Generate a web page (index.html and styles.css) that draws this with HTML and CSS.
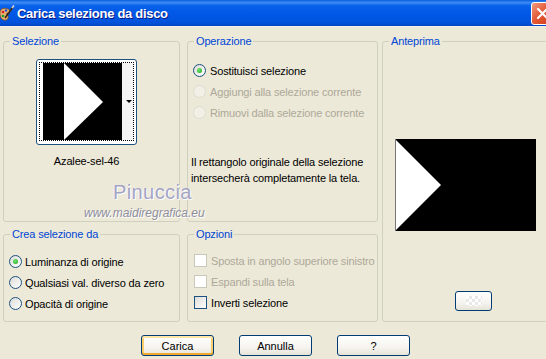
FILE: index.html
```html
<!DOCTYPE html>
<html lang="it">

<head>
    <meta charset="UTF-8">
    <title>Carica selezione da disco</title>
    <link rel="stylesheet" href="styles.css">
</head>

<body>
    <div class="window">
        <div class="titlebar">
            <svg class="app-icon" width="16" height="16" viewBox="0 0 16 16">
                <path d="M1 9 C0 4 5 2 9 4 C12 5 11 8 9 8 C7 8 7 10 9 11 C10 13 8 16 5 15 C3 15 1 12 1 9 Z" fill="#e8b070" stroke="#7a4a1a" stroke-width="0.8"/>
                <circle cx="4" cy="7" r="1.3" fill="#d42020"/>
                <circle cx="7" cy="5.5" r="1.2" fill="#2050d0"/>
                <circle cx="4" cy="11" r="1.3" fill="#20a030"/>
                <path d="M6 13 L14 2" stroke="#3a2a10" stroke-width="1.6"/>
                <path d="M13 3 L15 0.5" stroke="#d0d0d0" stroke-width="1.8"/>
            </svg>
            <span class="title">Carica selezione da disco</span>
            <span class="close">
                <svg width="21" height="21" viewBox="0 0 21 21">
                    <path d="M6 6 L15 15 M15 6 L6 15" stroke="#fff" stroke-width="2.2" stroke-linecap="round"/>
                </svg>
            </span>
        </div>

        <div class="panels">
            <fieldset class="group sel">
                <legend>Selezione</legend>
                <div class="thumb">
                    <div class="focus">
                        <svg class="thumb-img" width="79" height="77" viewBox="0 0 79 77">
                            <rect width="79" height="77" fill="#000"/>
                            <polygon points="21,0 60,39 21,77" fill="#fff"/>
                        </svg>
                        <div class="thumb-side"></div>
                    </div>
                    <span class="drop-arrow"></span>
                </div>
                <div class="thumb-name">Azalee-sel-46</div>
            </fieldset>

            <fieldset class="group op">
                <legend>Operazione</legend>
                <div class="options">
                    <div class="row"><span class="radio checked"></span>Sostituisci selezione</div>
                    <div class="row disabled"><span class="radio"></span>Aggiungi alla selezione corrente</div>
                    <div class="row disabled"><span class="radio"></span>Rimuovi dalla selezione corrente</div>
                </div>
                <p class="desc">Il rettangolo originale della selezione<br>intersecherà completamente la tela.</p>
            </fieldset>

            <fieldset class="group preview-group">
                <legend>Anteprima</legend>
                <svg class="preview" width="141" height="92" viewBox="0 0 141 92">
                    <rect width="141" height="92" fill="#000"/>
                    <polygon points="0,0 46,46 0,92" fill="#fff"/>
                    <line x1="0.5" y1="0" x2="0.5" y2="92" stroke="#777" stroke-width="1"/>
                </svg>
                <button class="btn small"><span class="checker"></span></button>
            </fieldset>

            <fieldset class="group crea">
                <legend>Crea selezione da</legend>
                <div class="options">
                    <div class="row"><span class="radio checked"></span>Luminanza di origine</div>
                    <div class="row"><span class="radio"></span>Qualsiasi val. diverso da zero</div>
                    <div class="row"><span class="radio"></span>Opacità di origine</div>
                </div>
            </fieldset>

            <fieldset class="group opz">
                <legend>Opzioni</legend>
                <div class="options">
                    <div class="row disabled"><span class="check"></span>Sposta in angolo superiore sinistro</div>
                    <div class="row disabled"><span class="check"></span>Espandi sulla tela</div>
                    <div class="row"><span class="check"></span>Inverti selezione</div>
                </div>
            </fieldset>
        </div>

        <div class="buttons">
            <button class="btn default">Carica</button>
            <button class="btn">Annulla</button>
            <button class="btn">?</button>
        </div>

        <div class="watermark">
            <div class="wm-name">Pinuccia</div>
            <div class="wm-url">www.maidiregrafica.eu</div>
        </div>
    </div>
</body>

</html>
```

FILE: styles.css
```css
body {
    margin: 0;
    background: #ece9d8;
    font-family: "Liberation Sans", Arial, sans-serif;
    font-size: 11px;
    letter-spacing: -0.15px;
    color: #000;
}

.window {
    position: relative;
    width: 546px;
    height: 359px;
    overflow: hidden;
    background: #ece9d8;
}

.titlebar {
    display: flex;
    align-items: center;
    height: 26px;
    border-bottom: 1px solid #f4f2e8;
    background: linear-gradient(to bottom, #0a5fdb 0%, #3d8bf5 10%, #0761ea 22%, #0058e6 55%, #0053dc 85%, #0347c4 100%);
}

.app-icon {
    margin-left: -1px;
    margin-right: 2px;
}

.title {
    color: #fff;
    font-weight: bold;
    font-size: 13px;
    letter-spacing: -0.3px;
    text-shadow: 1px 1px 0 #0a1883;
}

.close {
    display: flex;
    margin-left: auto;
    margin-right: -8px;
    width: 21px;
    height: 21px;
    border: 1px solid #fff;
    border-radius: 3px;
    background: linear-gradient(135deg, #f29b80 0%, #e35b36 45%, #cd3a15 100%);
}

.panels {
    display: grid;
    grid-template-columns: 177px 191px 1fr;
    grid-template-rows: 188px 95px;
    column-gap: 7px;
    row-gap: 5px;
    padding: 7px 0 0 3px;
}

.group {
    margin: 0;
    padding: 0;
    min-width: 0;
    border: 1px solid #d0d0bf;
    border-radius: 3px;
}

.group legend {
    margin-left: 6px;
    padding: 0 2px;
    line-height: 14px;
    color: #0046d5;
}

/* Selezione */
.sel {
    display: flex;
    flex-direction: column;
    align-items: center;
    padding-right: 10px;
}

.thumb {
    position: relative;
    box-sizing: border-box;
    width: 101px;
    height: 86px;
    margin-top: 11px;
    padding: 2px 2px 3px 2px;
    border: 1px solid #1c5180;
    border-radius: 3px;
    background: #fff;
}

.focus {
    display: flex;
    height: 100%;
    box-sizing: border-box;
    border: 1px dotted #000;
    padding: 0 0 0 3px;
}

.thumb-side {
    flex: 1;
    background: #f4f4f4;
}

.drop-arrow {
    position: absolute;
    right: 4px;
    top: 40px;
    border-left: 3px solid transparent;
    border-right: 3px solid transparent;
    border-top: 3px solid #000;
}

.thumb-name {
    margin-top: 9px;
    line-height: 14px;
}

/* radio / checkbox rows */
.options {
    display: flex;
    flex-direction: column;
}

.row {
    display: flex;
    align-items: center;
    height: 21px;
    gap: 4px;
    white-space: nowrap;
}

.row.disabled {
    color: #aca899;
}

.radio {
    position: relative;
    flex: none;
    box-sizing: border-box;
    width: 13px;
    height: 13px;
    border-radius: 50%;
    border: 1px solid #1c5180;
    background: linear-gradient(135deg, #dcdcd7, #fff);
}

.radio.checked::after {
    content: "";
    position: absolute;
    left: 3px;
    top: 3px;
    width: 5px;
    height: 5px;
    border-radius: 50%;
    background: radial-gradient(circle at 40% 35%, #6fe86f, #21a121);
}

.disabled .radio {
    border-color: #dedcd0;
    background: #f2f0e6;
}

.check {
    flex: none;
    box-sizing: border-box;
    width: 13px;
    height: 13px;
    border: 1px solid #1c5180;
    background: linear-gradient(135deg, #dcdcd7, #fff);
}

.disabled .check {
    border-color: #cac8bb;
    background: #fff;
}

/* Operazione */
.op .options {
    padding: 12px 0 0 5px;
}

.desc {
    margin: 31px 0 0 3px;
    line-height: 16px;
}

/* Anteprima */
.preview-group {
    margin-left: -3px;
    margin-right: -8px;
    grid-row: 1 / 3;
    grid-column: 3;
    display: flex;
    flex-direction: column;
    align-items: flex-start;
}

.preview {
    margin: 91px 0 0 12px;
}

.btn {
    box-sizing: border-box;
    height: 21px;
    width: 73px;
    padding: 0;
    border: 1px solid #003c74;
    border-radius: 3px;
    background: linear-gradient(to bottom, #fff 0%, #f5f4ef 60%, #e6e3d8 100%);
    font-family: "Liberation Sans", Arial, sans-serif;
    font-size: 11px;
    color: #000;
}

.btn.default {
    box-shadow: inset 0 -2px 0 #f0a92c, inset 0 2px 0 #ffe5a8, inset 2px 0 0 #fbcd6a, inset -2px 0 0 #fbcd6a;
}

.btn.small {
    width: 37px;
    height: 20px;
    margin: 60px 0 0 72px;
    display: flex;
    align-items: center;
    justify-content: center;
}

.checker {
    width: 16px;
    height: 10px;
    background: repeating-conic-gradient(#e8e8e8 0 25%, #fff 0 50%) 0 0 / 6px 6px;
}

/* Crea selezione da */
.crea .options {
    padding: 10px 0 0 5px;
}

.crea .row {
    gap: 3px;
}

/* Opzioni */
.opz .options {
    padding: 9px 0 0 6px;
}

.buttons {
    display: flex;
    gap: 25px;
    padding: 13px 0 0 141px;
}

.watermark {
    position: absolute;
    left: 84px;
    top: 180px;
    pointer-events: none;
}

.wm-name {
    margin-left: 29px;
    font-size: 20px;
    line-height: 24px;
    letter-spacing: 0.4px;
    color: #a4a4c4;
    text-shadow: 1px 1px 0 #fff, -1px 0 0 #f4f4f8;
}

.wm-url {
    margin-top: 2px;
    font-size: 12px;
    font-style: italic;
    line-height: 14px;
    letter-spacing: 0;
    color: #8e8e9e;
    text-shadow: 1px 1px 0 #fff;
}
```
